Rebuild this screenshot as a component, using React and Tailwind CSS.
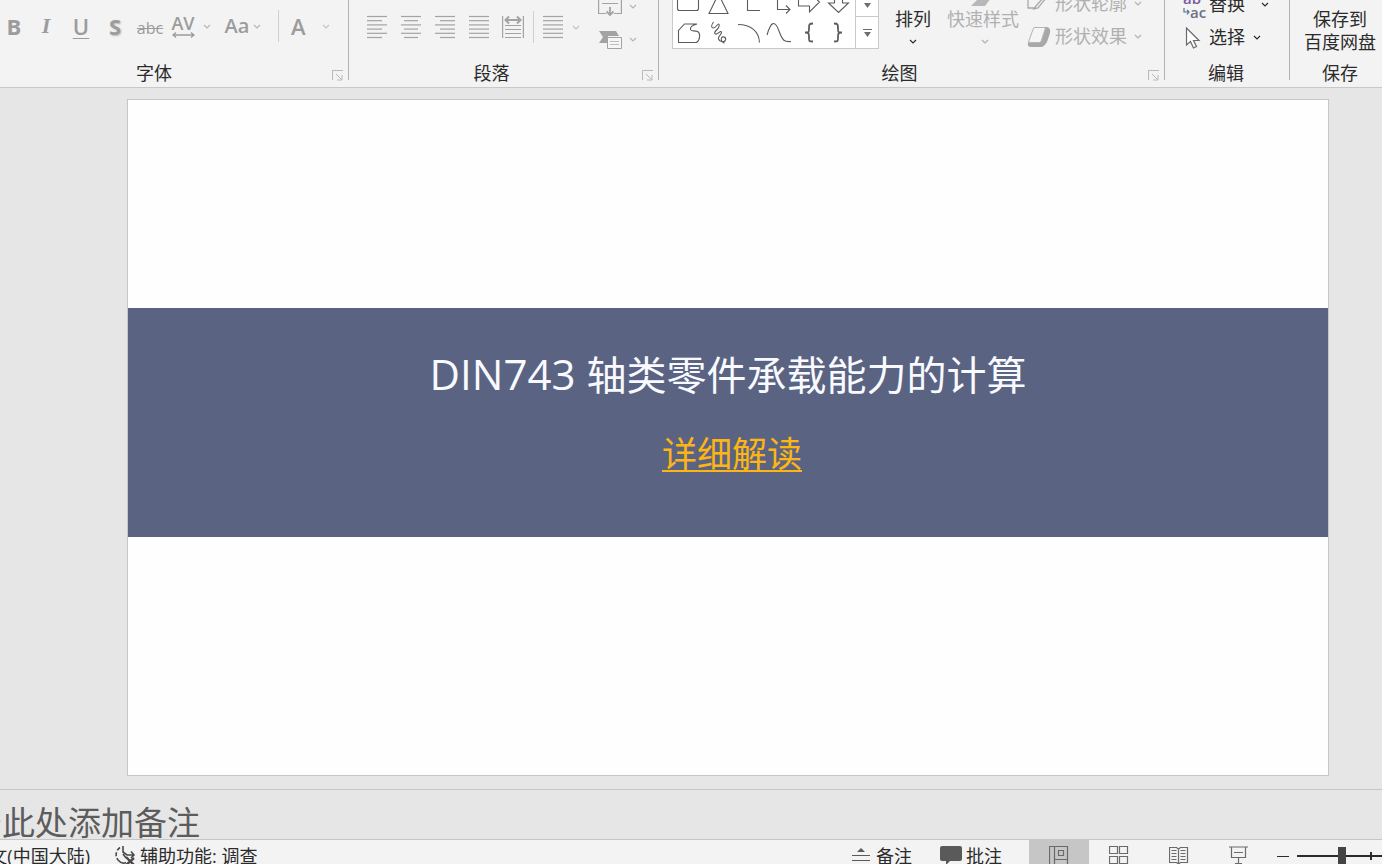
import { useState } from 'react'

function Chevron({ className = "" }) {
  return (
    <svg width="8" height="5" viewBox="0 0 8 5" fill="none" stroke="currentColor" strokeWidth="1.2" className={`shrink-0 ${className}`}>
      <path d="M1 1l3 3 3-3" />
    </svg>
  )
}

// lines is a list of [x1, x2] pairs, drawn from top to bottom
function LinesIcon({ lines }) {
  return (
    <svg width="22" height="24" viewBox="0 0 22 24" stroke="#a3a3a3" strokeWidth="1.2">
      {lines.map(([a, b], i) => (
        <path key={i} d={`M${a} ${1.5 + i * 4.2}H${b}`} />
      ))}
    </svg>
  )
}

function Launcher({ label }) {
  return (
    <button aria-label={label} className="w-6 flex justify-end items-center pr-1 pt-1 text-[#b8b8b8]">
      <svg width="12" height="12" viewBox="0 0 12 12" fill="none" stroke="currentColor">
        <path d="M.5 10V.5H11M4 4l5.500 5.500M10 5v5H5" />
      </svg>
    </button>
  )
}

function Group({ title, launcher, className = "", children }) {
  return (
    <section className={`flex flex-col h-[87px] shrink-0 ${className}`}>
      <div className="h-15 flex items-end">{children}</div>
      <div className="h-[27px] flex">
        <h2 className="flex-1 text-center leading-[27px]">{title}</h2>
        {launcher && <Launcher label={launcher} />}
      </div>
    </section>
  )
}

const Divider = () => <div className="w-px h-20 shrink-0 bg-[#b3b3b3]"></div>

const aligns = [
  { name: "左对齐", lines: [[1, 21], [1, 16], [1, 21], [1, 16], [1, 21], [1, 16]] },
  { name: "居中", lines: [[1, 21], [4, 18], [1, 21], [4, 18], [1, 21], [4, 18]] },
  { name: "右对齐", lines: [[1, 21], [6, 21], [1, 21], [6, 21], [1, 21], [6, 21]] },
  { name: "两端对齐", lines: [[1, 21], [1, 21], [1, 21], [1, 21], [1, 21], [1, 21]] },
]

const shapes = [
  { name: "矩形", d: "M6.500 5.500h17q2 0 2 2v14q0 2-2 2h-17q-2 0-2-2v-14q0-2 2-2z" },
  { name: "三角形", d: "M15.500 7L25 26.500H6z" },
  { name: "肘形连接符", d: "M14.500 6.500v17H27" },
  { name: "肘形箭头", d: "M7 6.500h7.500v16H27M23 18.500l4 4-4 4" },
  { name: "右箭头", d: "M5.500 11.500h11v-6L26.500 15 16.500 25v-6h-11z" },
  { name: "下箭头", d: "M11.500 6v10h-6L15.500 25.500 25.500 16h-6V6z" },
  { name: "任意多边形", d: "M5.500 24.500v-12l6-6.500h12.500c-4 1-7 3-6.500 5.500s4 .5 7 2 3 8-1 11z" },
  { name: "自由曲线", d: "M10.500 4c-3 4-2 6 0 6s4-4 5-4 1 3-1 5-4 4-2 5 5-4 6-2-4 4-3 7 6 4 7 1-3-4-4-2 1 5 3 5" },
  { name: "弧形", d: "M5 6.500c13 0 21 7 21.500 18" },
  { name: "曲线", d: "M4 17C8 3 12 2 16 13S22 24 28 23.500" },
  { name: "左大括号", d: "M20 5.500c-4 0-4 1-4 5s0 4-4 4c4 0 4 1 4 5s0 4 4 4", w: 1.8 },
  { name: "右大括号", d: "M11 5.500c4 0 4 1 4 5s0 4 4 4c-4 0-4 1-4 5s0 4-4 4", w: 1.8 },
]

const views = [
  { name: "普通视图", d: "M.5.500h18v18H.5zM5.500.500v18M5.500 13.500h13M9.500 4.500h5v5h-5z" },
  { name: "幻灯片浏览", d: "M.5.500h8v7h-8zM10.500.500h8v7h-8zM.5 10.500h8v7h-8zM10.500 10.500h8v7h-8z" },
  { name: "阅读视图", d: "M.5 1.500h7l2 1.500 2-1.500h7v15h-7l-2 1.500-2-1.500h-7zM9.500 3v15M2.500 4.500h5M2.500 7.500h5M2.500 10.500h5M2.500 13.500h5M11.500 4.500h5M11.500 7.500h5M11.500 10.500h5M11.500 13.500h5" },
  { name: "幻灯片放映", d: "M0 1h19M2.500 1.500v10h14v-10M5 6.500h9M9.500 11.500v6M6 17.500h7" },
]

function FontGroup() {
  return (
    <div className="w-[348px] shrink-0 flex justify-end overflow-hidden">
      <Group title="字体" launcher="字体设置" className="w-[364px]">
        <div className="flex items-center h-15 pb-2 pl-4 text-[#9c9c9c] text-[22px] leading-[24px]">
          <button aria-label="加粗" className="w-[28px] font-bold">B</button>
          <button aria-label="倾斜" className="w-[36px] font-['Liberation_Serif',serif] font-bold italic">I</button>
          <button aria-label="下划线" className="w-[34px] font-semibold underline decoration-1 underline-offset-3">U</button>
          <button aria-label="文字阴影" className="w-[34px] font-bold [text-shadow:1px_1px_2px_#bbbbbb]">S</button>
          <button aria-label="删除线" className="w-[36px] pt-1 text-[16px] line-through">abc</button>
          <button aria-label="字符间距" className="w-[46px] flex items-center justify-center gap-2 text-[18px] leading-[18px]">
            <span className="flex flex-col items-center font-semibold">
              AV
              <svg width="23" height="6" viewBox="0 0 23 6" fill="none" stroke="currentColor" strokeWidth="1.3">
                <path d="M1 3h21M4 .500L1 3l3 2.500M19 .500L22 3l-3 2.500" />
              </svg>
            </span>
            <Chevron className="text-[#b5b5b5]" />
          </button>
          <button aria-label="更改大小写" className="w-[58px] flex items-center justify-center gap-1 text-[20px] font-semibold">
            Aa <Chevron className="text-[#b5b5b5]" />
          </button>
          <span className="w-px h-8 ml-[6px] bg-[#d0d0d0]"></span>
          <button aria-label="字体颜色" className="flex items-center gap-4 pl-3 font-semibold">
            A <Chevron className="text-[#c4c4c4]" />
          </button>
        </div>
      </Group>
    </div>
  )
}

function ParagraphGroup() {
  return (
    <Group title="段落" launcher="段落设置" className="w-[309px]">
      <div className="flex items-center h-15 pb-1.5 pl-[11px]">
        {aligns.map((a) => (
          <button key={a.name} aria-label={a.name} className="w-[34px] flex justify-center">
            <LinesIcon lines={a.lines} />
          </button>
        ))}
        <button aria-label="分散对齐" className="w-[34px] flex justify-center">
          <svg width="22" height="24" viewBox="0 0 22 24" fill="none" stroke="#a3a3a3" strokeWidth="1.2">
            <path d="M.6 1v22M21.400 1v22M3 10.500h16M3 14.500h16M3 18.500h16M3 22.500h16" />
            <path d="M4 5h14M7 1.500L3.500 5 7 8.500M15 1.500L18.500 5 15 8.500" strokeWidth="2" />
          </svg>
        </button>
        <span className="w-px h-8 ml-[3px] bg-[#d0d0d0]"></span>
        <button aria-label="分栏" className="flex items-center gap-2 ml-2">
          <LinesIcon lines={[[1, 21], [1, 21], [1, 21], [1, 21], [1, 21], [1, 21]]} />
          <Chevron className="text-[#c4c4c4]" />
        </button>
      </div>
      <div className="flex flex-col pb-1 pl-[18px] text-[#b5b5b5]">
        <button aria-label="对齐文本" className="h-[33px] flex items-center gap-[7px]">
          <svg width="24" height="21" viewBox="0 0 24 21" fill="none" stroke="#a3a3a3" strokeWidth="1.2">
            <path d="M8 17.500H.6V0M16 17.500h7.400V0M4 3.500h16M4 7.500h16" />
            <path d="M12 11v8M8.500 15.500L12 19l3.500-3.500" strokeWidth="1.8" />
          </svg>
          <Chevron />
        </button>
        <button aria-label="转换为 SmartArt" className="h-[33px] flex items-center gap-[7px]">
          <svg width="24" height="21" viewBox="0 0 24 21">
            <path d="M1 2h17l3 5H10v7H1l4-6z" fill="#a3a3a3" />
            <path d="M9.500 8.500h14v11h-14z" fill="#f6f6f6" stroke="#a3a3a3" />
            <path d="M12 12.500h9M12 15.500h9" stroke="#bdbdbd" />
          </svg>
          <Chevron />
        </button>
      </div>
    </Group>
  )
}

function DrawingGroup() {
  return (
    <Group title="绘图" launcher="设置形状格式" className="min-w-[505px] flex-1">
      <div className="flex ml-[13px] mb-[11px] border border-[#c9c9c9] bg-white">
        <div className="grid grid-cols-6">
          {shapes.map((s) => (
            <button key={s.name} aria-label={s.name} className="w-[30px] h-[31px]">
              <svg width="30" height="30" viewBox="0 0 30 30" fill="none" stroke="#5c5c5c" strokeWidth={s.w || 1.1}>
                <path d={s.d} />
              </svg>
            </button>
          ))}
        </div>
        <div className="flex flex-col w-[23px] ml-[2px] border-l border-[#c9c9c9]">
          <button aria-label="下一行" className="h-[31px] flex items-end justify-center pb-2 border-b border-[#c9c9c9]">
            <svg width="9" height="5" viewBox="0 0 9 5"><path d="M1 0h7L4.500 5z" fill="#6e6e6e" /></svg>
          </button>
          <button aria-label="其他形状" className="h-[31px] flex items-center justify-center">
            <svg width="9" height="8" viewBox="0 0 9 8"><path d="M0 0h9v1H0zM1 3h7L4.500 8z" fill="#6e6e6e" /></svg>
          </button>
        </div>
      </div>
      <button className="flex flex-col items-center w-[68px] pb-4 leading-[24px]">
        排列
        <Chevron className="mt-2" />
      </button>
      <button className="flex flex-col items-center w-[72px] pb-4 leading-[24px] text-[#b0b0b0] whitespace-nowrap">
        <svg width="30" height="16" viewBox="0 0 30 16"><path d="M15 3l8 4-6 8H3z" fill="#b8b8b8" /></svg>
        快速样式
        <Chevron className="mt-2 ml-1" />
      </button>
      <div className="flex flex-col pb-[7px] pl-2 text-[#b0b0b0]">
        <button className="h-[33px] flex items-center whitespace-nowrap">
          <svg width="24" height="22" viewBox="0 0 24 22" fill="none" stroke="#a8a8a8" strokeWidth="1.3">
            <path d="M14 1H1v14h8M17 4l-8 9-2 3 4-1 8-10z" />
          </svg>
          <span className="ml-1">形状轮廓</span>
          <Chevron className="ml-[7px]" />
        </button>
        <button className="h-[33px] flex items-center whitespace-nowrap">
          <svg width="24" height="22" viewBox="0 0 24 22">
            <path d="M7 1h13q4 1 3 6l-3 9q-3 5-6 5H4q-4 0-3-4z" fill="#a8a8a8" />
            <path d="M7.500 1.500H17q2 0 1 2l-4 12q-1 1-2 1H3q-2 0-1-2l4-11q1-2 1.500-2z" fill="#f5f5f5" stroke="#b5b5b5" />
          </svg>
          <span className="ml-1">形状效果</span>
          <Chevron className="ml-[7px]" />
        </button>
      </div>
    </Group>
  )
}

function EditGroup() {
  return (
    <Group title="编辑" className="w-[122px]">
      <div className="flex flex-col pb-[6px] pl-[18px]">
        <button className="h-[33px] flex items-center">
          <span className="w-[26px] text-left text-[15px] leading-[14px] font-semibold text-[#6b6f86] flex flex-col" aria-hidden="true">
            <span className="text-[#7a5a9c]">ab</span>
            <span className="flex items-center">
              <svg width="7" height="8" viewBox="0 0 7 8" fill="none" stroke="#4a6ea0" strokeWidth="1.2"><path d="M1 0v4h5M4 2l2 2-2 2.500" /></svg>
              ac
            </span>
          </span>
          替换
          <Chevron className="ml-4" />
        </button>
        <button className="h-[33px] flex items-center">
          <svg width="26" height="22" viewBox="0 0 26 22" fill="#fff" stroke="#6a6a6a" strokeWidth="1.200">
            <path d="M3.500 1v17l4-3.500 3 6.500 3-1.500-3-6h5.500z" />
          </svg>
          选择
          <Chevron className="ml-2" />
        </button>
      </div>
    </Group>
  )
}

export default function App() {
  const [zoom, setZoom] = useState(29)
  const [view, setView] = useState("普通视图")
  const [notes, setNotes] = useState("")

  return (
    <main className="h-screen flex flex-col overflow-hidden bg-[#e6e6e6] text-[#2b2b2b] text-[18px] font-['Open_Sans','Noto_Sans_CJK_SC',sans-serif]">
      <header className="h-[88px] shrink-0 flex overflow-hidden bg-[#f3f3f3] border-b border-[#c8c8c8]">
        <FontGroup />
        <Divider />
        <ParagraphGroup />
        <Divider />
        <DrawingGroup />
        <Divider />
        <EditGroup />
        <span className="w-[2px] shrink-0"></span>
        <Divider />
        <Group title="保存" className="w-[100px]">
          <button className="w-full pb-[6px] leading-[23px]">保存到<br />百度网盘</button>
        </Group>
      </header>

      <div className="flex-1 min-h-0 flex pt-[11px] pb-[13px] pl-[127px] pr-[53px]">
        <article className="flex-1 grid grid-rows-[208fr_229fr_238fr] bg-[#fefefe] border border-[#c6c6c6]">
          <div className="row-start-2 bg-[#5a6482] flex flex-col items-center pt-[38px]">
            <h1 className="text-[40px] leading-[56px] text-[#f8faff]">
              <span className="text-[42px]">DIN743 </span>轴类零件承载能力的计算
            </h1>
            <a href="#" className="mt-6 pl-2 text-[35px] leading-[54px] text-[#fcb514] underline decoration-2 underline-offset-3">详细解读</a>
          </div>
        </article>
      </div>

      <div className="h-[50px] shrink-0 border-t border-[#c6c6c6] pt-3 overflow-hidden">
        <div className="w-[200px] flex justify-end">
          <input aria-label="备注" placeholder="单击此处添加备注" value={notes} onChange={(e) => setNotes(e.target.value)}
            className="w-[264px] h-[42px] shrink-0 text-[33px] outline-none placeholder:text-[#5c5c5c]" />
        </div>
      </div>

      <footer className="h-[25px] shrink-0 overflow-hidden bg-[#f3f3f3] border-t border-[#c6c6c6]">
        <div className="h-8 flex items-center whitespace-nowrap">
          <button className="w-[90px] h-full flex items-center justify-end overflow-hidden">
            <span>中文(中国大陆)</span>
          </button>
          <button className="flex items-center gap-1 ml-6">
            <svg width="22" height="22" viewBox="0 0 22 22" fill="none" stroke="#4a4a4a" strokeWidth="1.600">
              <path d="M6 2.500A8.500 8.500 0 0 0 4 15" strokeDasharray="4 2" />
              <path d="M4 15c3 3.500 6 3.500 8 2.500M9 1v6l4 3h7M17 6.500l3 3.500-3 3M9 9l3 4" />
              <path d="M12 12l8 8M20 13l-8 7" strokeWidth="2.400" />
            </svg>
            辅助功能: 调查
          </button>

          <button className="flex items-center gap-[6px] ml-auto">
            <svg width="18" height="18" viewBox="0 0 18 18" stroke="#5a5a5a" strokeWidth="1.200">
              <path d="M5 5h8L9 1z" fill="#5a5a5a" stroke="none" />
              <path d="M0 8.500h18M0 13.500h18M0 17.500h9" />
            </svg>
            备注
          </button>
          <button className="flex items-center gap-1 ml-7">
            <svg width="22" height="20" viewBox="0 0 22 20">
              <path d="M2 0h18q2 0 2 2v11q0 2-2 2h-10l-4 4v-4H2q-2 0-2-2V2q0-2 2-2z" fill="#5a5a5a" />
            </svg>
            批注
          </button>

          <nav className="flex h-full ml-[27px]">
            {views.map((v) => (
              <button key={v.name} aria-label={v.name} onClick={() => setView(v.name)}
                className={`w-[60px] h-full flex items-center justify-center ${view === v.name ? "bg-[#c6c6c6]" : ""}`}>
                <svg width="20" height="20" viewBox="0 0 20 20" fill="none" stroke="#6a6a6a" strokeWidth="1.200">
                  <path d={v.d} />
                </svg>
              </button>
            ))}
          </nav>

          <button aria-label="缩小" className="w-3 h-4 ml-2 flex items-center">
            <span className="w-full h-px bg-[#2b2b2b]"></span>
          </button>
          <div className="w-[85px] ml-2 overflow-hidden">
            <div className="relative w-[149px] h-5 flex items-center">
              <span className="absolute left-[73px] top-[6px] w-[2px] h-2 bg-[#2b2b2b]"></span>
              <input type="range" aria-label="显示比例" value={zoom} onChange={(e) => setZoom(Number(e.target.value))}
                className="w-full h-5 appearance-none bg-transparent [&::-webkit-slider-runnable-track]:h-[2px] [&::-webkit-slider-runnable-track]:bg-[#2b2b2b] [&::-webkit-slider-thumb]:appearance-none [&::-webkit-slider-thumb]:w-2 [&::-webkit-slider-thumb]:h-[18px] [&::-webkit-slider-thumb]:-mt-2 [&::-webkit-slider-thumb]:bg-[#444444]" />
            </div>
          </div>
        </div>
      </footer>
    </main>
  )
}
